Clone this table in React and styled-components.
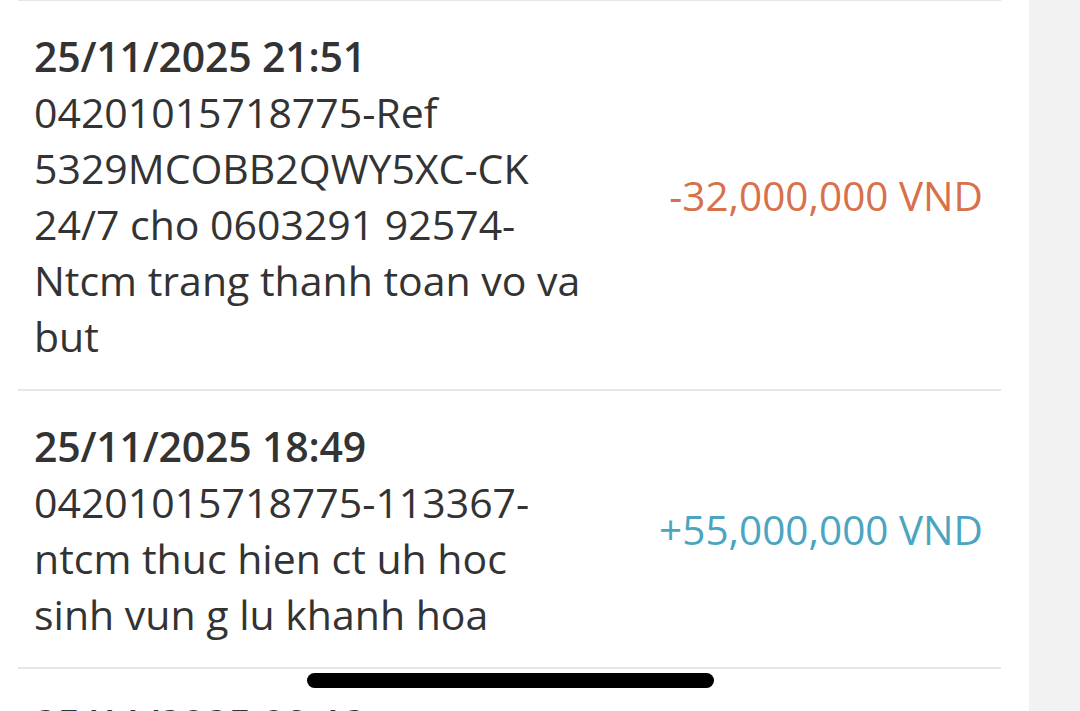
import styled, { createGlobalStyle } from 'styled-components';

const transactions = [
  {
    time: '25/11/2025 21:51',
    note: '04201015718775-Ref 5329MCOBB2QWY5XC-CK 24/7 cho 0603291 92574-Ntcm trang thanh toan vo va but',
    amount: '-32,000,000 VND',
    kind: 'out',
  },
  {
    time: '25/11/2025 18:49',
    note: '04201015718775-113367-ntcm thuc hien ct uh hoc sinh vun g lu khanh hoa',
    amount: '+55,000,000 VND',
    kind: 'in',
  },
  {
    time: '25/11/2025 09:12',
    note: '04201015718775-CK',
    amount: '-1,000,000 VND',
    kind: 'out',
  },
];

function App() {
  return (
    <>
      <GlobalStyle />
      <Page>
        <Main>
          <List>
            {transactions.map((t) => (
              <Row key={t.time}>
                <Details>
                  <Time>{t.time}</Time>
                  <Note>{t.note}</Note>
                </Details>
                <Amount $kind={t.kind}>{t.amount}</Amount>
              </Row>
            ))}
          </List>
        </Main>
        <Side />
      </Page>
      <HomeIndicator />
    </>
  );
}

const GlobalStyle = createGlobalStyle`
  html, body {
    margin: 0;
    padding: 0;
    height: 711px;
    overflow: hidden;
    background: #ffffff;
  }
  body {
    font-family: "Open Sans", "Liberation Sans", sans-serif;
    color: #333333;
  }
`;

const Page = styled.div`
  display: flex;
  height: 711px;
  overflow: hidden;
`;

const Main = styled.div`
  width: 1029px;
  background: #ffffff;
`;

const Side = styled.div`
  flex: 1;
  background: #f2f2f2;
`;

const List = styled.div`
  margin: -1px 28px 0 18px;
  border-top: 2px solid #e6e6e6;
`;

const Row = styled.div`
  display: flex;
  align-items: center;
  justify-content: space-between;
  padding: 27px 18px 25px 16px;
  border-bottom: 2.5px solid #e6e6e6;
`;

const Details = styled.div`
  width: 552px;
  font-size: 41px;
  line-height: 56px;
  color: #333333;
`;

const Time = styled.div`
  font-weight: 600;
  letter-spacing: -0.2px;
`;

const Note = styled.div`
  font-weight: 400;
`;

const Amount = styled.div`
  font-size: 40.5px;
  line-height: 56px;
  white-space: nowrap;
  color: ${(p) => (p.$kind === 'in' ? '#4ba5c0' : '#d8704a')};
`;

const HomeIndicator = styled.div`
  position: fixed;
  left: 307px;
  top: 673px;
  width: 407px;
  height: 15px;
  border-radius: 8px;
  background: #000000;
`;

export default App;
